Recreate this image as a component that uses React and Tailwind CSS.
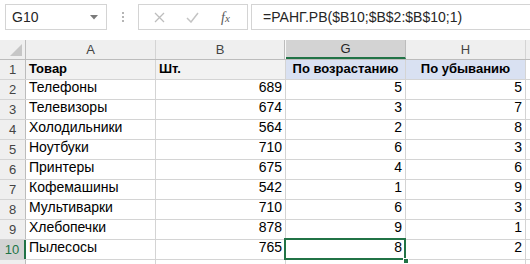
import { Fragment } from 'react';

const rows = [
  ['Телефоны', 689, 5, 5],
  ['Телевизоры', 674, 3, 7],
  ['Холодильники', 564, 2, 8],
  ['Ноутбуки', 710, 6, 3],
  ['Принтеры', 675, 4, 6],
  ['Кофемашины', 542, 1, 9],
  ['Мультиварки', 710, 6, 3],
  ['Хлебопечки', 878, 9, 1],
  ['Пылесосы', 765, 8, 2],
];

const font = { fontFamily: '"Liberation Sans", Arial, sans-serif' };

const App = () => {
  return (
    <div className="w-[530px] h-[264px] overflow-hidden bg-white text-black text-[14px]" style={font}>
      {/* Toolbar: name box + formula bar */}
      <div className="h-[40px] flex items-start pt-[4px] pl-[5px]">
        <div className="w-[102px] h-[26px] border border-[#d4d4d4] flex items-center justify-between pl-[6px] pr-[8px]">
          <span className="text-[14px] text-[#262626]">G10</span>
          <svg width="8" height="5" viewBox="0 0 8 5"><path d="M0 0h8L4 4.5z" fill="#7a7a7a" /></svg>
        </div>
        <div className="w-[31px] h-[26px] flex flex-col items-center justify-center gap-[2px]">
          <span className="w-[2px] h-[2px] bg-[#b5b5b5]" />
          <span className="w-[2px] h-[2px] bg-[#b5b5b5]" />
          <span className="w-[2px] h-[2px] bg-[#b5b5b5]" />
        </div>
        <div className="w-[110px] h-[26px] border border-[#d4d4d4] flex items-center">
          <svg className="ml-[15px]" width="11" height="11" viewBox="0 0 11 11">
            <path d="M1 1l9 9M10 1l-9 9" stroke="#bdbdbd" strokeWidth="1.3" />
          </svg>
          <svg className="ml-[21px]" width="13" height="11" viewBox="0 0 13 11">
            <path d="M1 6l4 4 7-9" stroke="#c4c4c4" strokeWidth="1.5" fill="none" />
          </svg>
          <span className="ml-[22px] text-[14px] italic text-[#5a5a5a]" style={{ fontFamily: '"Liberation Serif", serif' }}>
            f<span className="text-[11px]">x</span>
          </span>
        </div>
        <div className="ml-[3px] flex-1 h-[26px] border-t border-b border-l border-[#d4d4d4] flex items-center pl-[11px]">
          <span className="text-[14px] text-[#262626]">=РАНГ.РВ($B10;$B$2:$B$10;1)</span>
        </div>
      </div>

      {/* Column headers */}
      <div className="flex h-[20px] bg-[#efefef] border-b border-[#bcbcbc] text-[13px] text-[#444]">
        <div className="w-[26px] border-r border-[#bcbcbc] relative">
          <svg className="absolute right-[3px] bottom-[3px]" width="12" height="12" viewBox="0 0 12 12">
            <path d="M12 0v12H0z" fill="#c6c6c6" />
          </svg>
        </div>
        <div className="w-[130px] border-r border-[#d4d4d4] flex items-center justify-center">A</div>
        <div className="w-[129px] border-r border-[#bcbcbc] flex items-center justify-center">B</div>
        <div className="w-[1px] bg-[#f7f7f7]" />
        <div className="w-[120px] bg-[#d3d3d3] border-b-2 border-b-[#217346] border-r border-r-[#bcbcbc] flex items-center justify-center text-[#262626]">G</div>
        <div className="w-[120px] border-r border-[#d4d4d4] flex items-center justify-center">H</div>
        <div className="flex-1" />
      </div>

      {/* Row 1 */}
      <div className="flex h-[20px] border-b border-[#d4d4d4] font-bold">
        <div className="w-[26px] bg-[#efefef] border-r border-[#bcbcbc] flex items-center justify-center font-normal text-[13px] text-[#444]">1</div>
        <div className="w-[130px] bg-[#f2f2f2] border-r border-[#d4d4d4] flex items-end pl-[3px] pb-[1px] text-[13px]">Товар</div>
        <div className="w-[130px] bg-[#f2f2f2] border-r border-[#d4d4d4] flex items-end pl-[3px] pb-[1px] text-[13px]">Шт.</div>
        <div className="w-[120px] bg-[#d9e1f2] border-r border-[#d4d4d4] flex items-end justify-center pb-[1px] text-[13px]">По возрастанию</div>
        <div className="w-[120px] bg-[#d9e1f2] border-r border-[#d4d4d4] flex items-end justify-center pb-[1px] text-[13px]">По убыванию</div>
        <div className="flex-1" />
      </div>

      {rows.map((r, i) => {
        const n = i + 2;
        const active = n === 10;
        return (
          <div key={n} className="flex h-[20px] border-b border-[#d4d4d4]">
            <div
              className={
                active
                  ? 'w-[26px] bg-[#d3d3d3] border-r-2 border-[#217346] flex items-center justify-center text-[13px] text-[#217346]'
                  : 'w-[26px] bg-[#efefef] border-r border-[#bcbcbc] flex items-center justify-center text-[13px] text-[#444]'
              }
            >
              {n}
            </div>
            <div className="w-[130px] border-r border-[#d4d4d4] flex items-end pl-[3px] pb-[1px]">{r[0]}</div>
            <div className="w-[130px] border-r border-[#d4d4d4] flex items-end justify-end pr-[3px] pb-[1px]">{r[1]}</div>
            <div className="w-[120px] border-r border-[#d4d4d4] flex items-end justify-end pr-[3px] pb-[1px] relative">
              {r[2]}
              {active && (
                <Fragment>
                  <div className="absolute -left-[2px] -top-[2px] -right-[1px] -bottom-[1px] border-2 border-[#217346]" />
                  <div className="absolute -right-[4px] -bottom-[5px] w-[6px] h-[6px] bg-[#217346] border border-white" />
                </Fragment>
              )}
            </div>
            <div className="w-[120px] border-r border-[#d4d4d4] flex items-end justify-end pr-[3px] pb-[1px]">{r[3]}</div>
            <div className="flex-1" />
          </div>
        );
      })}

      {/* partial row 11 */}
      <div className="flex h-[20px]">
        <div className="w-[26px] bg-[#efefef] border-r border-[#bcbcbc]" />
        <div className="w-[130px] border-r border-[#d4d4d4]" />
        <div className="w-[130px] border-r border-[#d4d4d4]" />
        <div className="w-[120px] border-r border-[#d4d4d4]" />
        <div className="w-[120px] border-r border-[#d4d4d4]" />
      </div>
    </div>
  );
};

export default App;
